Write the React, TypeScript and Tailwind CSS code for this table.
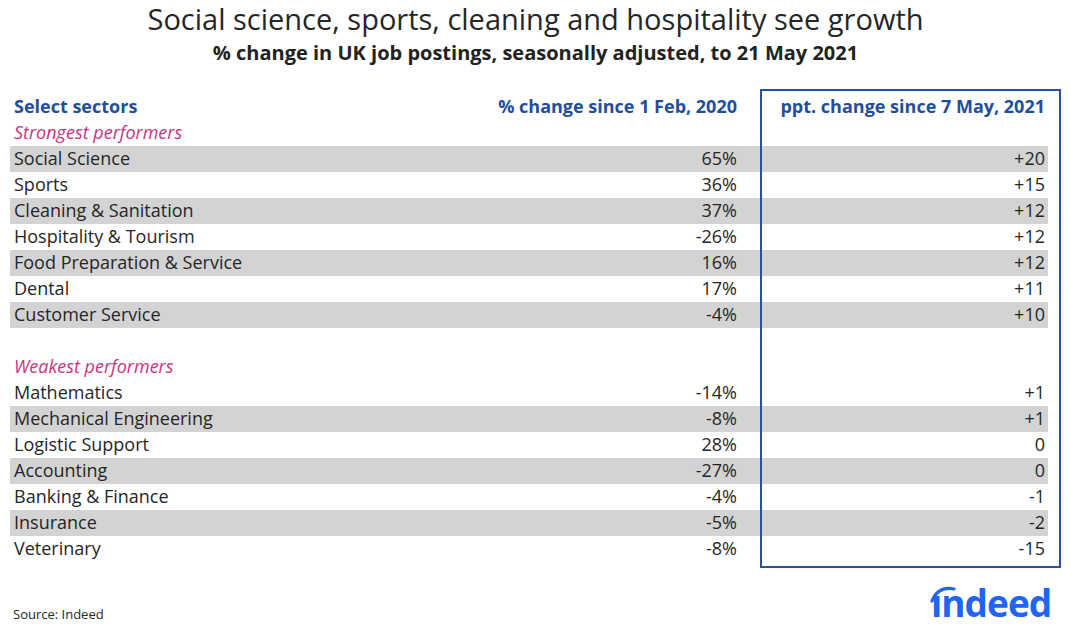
const strongest = [
  { name: "Social Science", pct: "65%", ppt: "+20" },
  { name: "Sports", pct: "36%", ppt: "+15" },
  { name: "Cleaning & Sanitation", pct: "37%", ppt: "+12" },
  { name: "Hospitality & Tourism", pct: "-26%", ppt: "+12" },
  { name: "Food Preparation & Service", pct: "16%", ppt: "+12" },
  { name: "Dental", pct: "17%", ppt: "+11" },
  { name: "Customer Service", pct: "-4%", ppt: "+10" },
];

const weakest = [
  { name: "Mathematics", pct: "-14%", ppt: "+1" },
  { name: "Mechanical Engineering", pct: "-8%", ppt: "+1" },
  { name: "Logistic Support", pct: "28%", ppt: "0" },
  { name: "Accounting", pct: "-27%", ppt: "0" },
  { name: "Banking & Finance", pct: "-4%", ppt: "-1" },
  { name: "Insurance", pct: "-5%", ppt: "-2" },
  { name: "Veterinary", pct: "-8%", ppt: "-15" },
];

type Row = { name: string; pct: string; ppt: string };

function DataRow({ row, shaded }: { row: Row; shaded: boolean }) {
  return (
    <div className={`flex h-[26px] items-center pb-[2px] text-[18px] text-[#262626] ${shaded ? "bg-[#d3d3d3]" : ""}`}>
      <div className="flex-1 pl-1">{row.name}</div>
      <div className="w-[200px] pr-1 text-right">{row.pct}</div>
      <div className="w-[307px] text-right pr-[3px]">{row.ppt}</div>
    </div>
  );
}

function GroupLabel({ children }: { children: string }) {
  return <div className="flex h-[26px] items-center pb-[2px] pl-1 text-[18px] italic text-[#c8357d]">{children}</div>;
}

function IndeedLogo() {
  return (
    <div className="relative h-[40px] w-[124px]">
      <svg className="absolute left-0 top-0" width="30" height="20" viewBox="0 0 30 20">
        <path d="M2 17 C6 7 14 3 24 5" fill="none" stroke="#2164f3" strokeWidth="3.2" strokeLinecap="round" />
      </svg>
      <span className="absolute left-[1px] top-[-9px] text-[37px] font-bold tracking-[-1px] text-[#2164f3] [font-family:'Open_Sans',sans-serif]">
        ındeed
      </span>
    </div>
  );
}

export default function App() {
  return (
    <div className="relative h-[632px] w-[1071px] overflow-hidden bg-white [font-family:'Open_Sans',sans-serif]">
      <div className="pt-[2px] text-center text-[29px] leading-[34px] text-[#262626]">
        Social science, sports, cleaning and hospitality see growth
      </div>
      <div className="mt-[4px] text-center text-[20px] font-bold leading-[26px] text-[#222]">
        % change in UK job postings, seasonally adjusted, to 21 May 2021
      </div>

      <div className="relative ml-[10px] mt-[28px] w-[1038px]">
        <div className="flex h-[26px] items-center pb-[2px] text-[18px] font-bold text-[#1f4e9c]">
          <div className="flex-1 pl-1">Select sectors</div>
          <div className="w-[300px] pr-1 text-right">% change since 1 Feb, 2020</div>
          <div className="w-[307px] text-right pr-[3px]">ppt. change since 7 May, 2021</div>
        </div>
        <GroupLabel>Strongest performers</GroupLabel>
        {strongest.map((r, i) => (
          <DataRow key={r.name} row={r} shaded={i % 2 === 0} />
        ))}
        <div className="h-[26px]" />
        <GroupLabel>Weakest performers</GroupLabel>
        {weakest.map((r, i) => (
          <DataRow key={r.name} row={r} shaded={i % 2 === 1} />
        ))}

        <div className="pointer-events-none absolute left-[750px] top-[-5px] h-[479px] w-[301px] border-2 border-[#2a51a0]" />
      </div>

      <div className="absolute bottom-[8px] left-[13px] text-[13px] text-[#262626]">Source: Indeed</div>
      <div className="absolute bottom-[8px] right-[17px]">
        <IndeedLogo />
      </div>
    </div>
  );
}
